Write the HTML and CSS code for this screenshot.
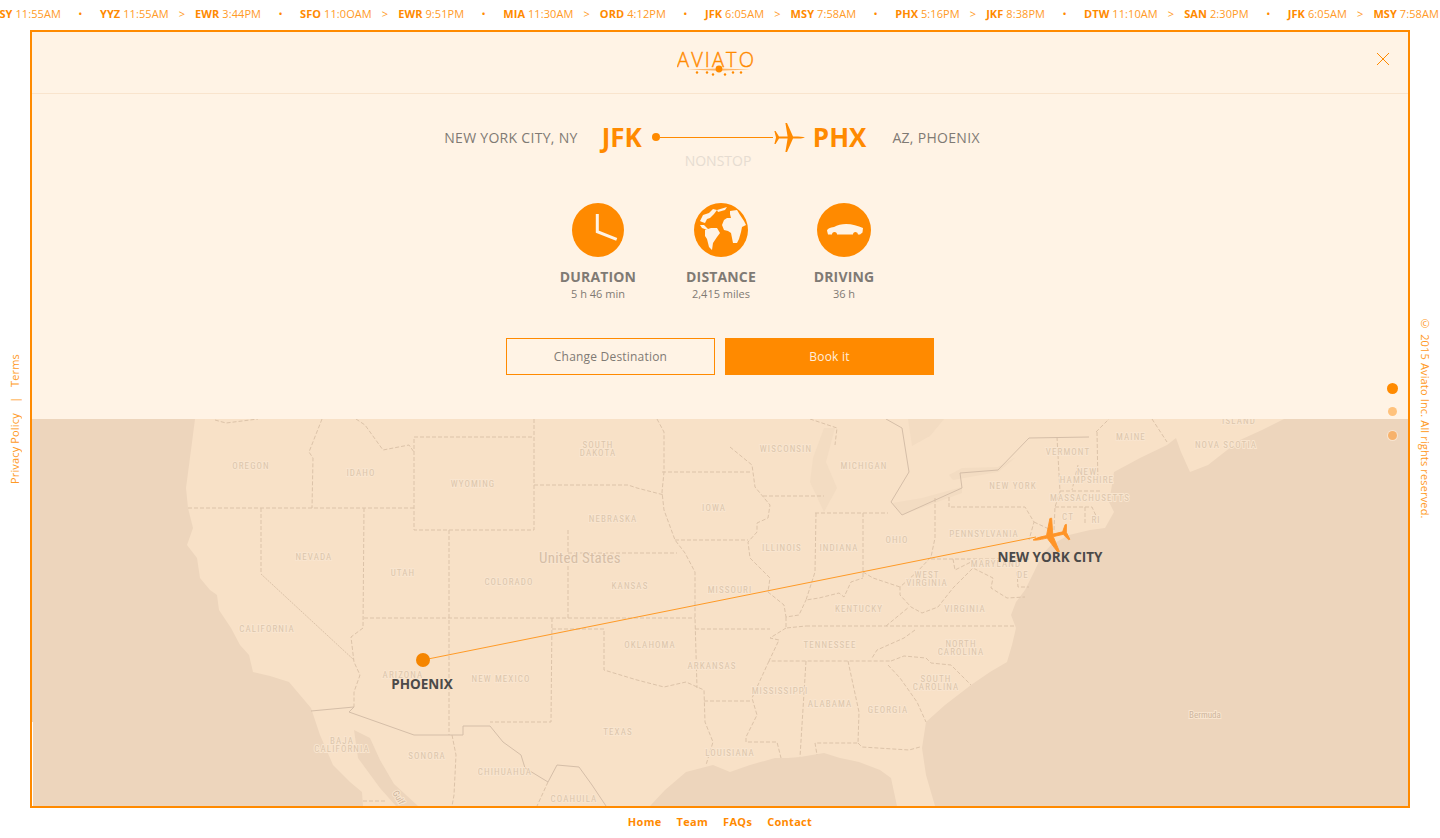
FILE: index.html
```html
<!DOCTYPE html>
<html lang="en">
<head>
  <meta charset="UTF-8">
  <meta name="viewport" content="width=device-width, initial-scale=1.0">
  <title>Aviato</title>
  <link rel="stylesheet" href="styles.css">
</head>
<body>
  <svg class="defs" width="0" height="0">
    <defs>
      <path id="plane" d="M32 14.5C30 13.6 26 13.4 22 13.4L20 13.4L14 0L12.4 0L14.6 13.4L6 13.4L2.6 8L1.4 8L3 14.5L1.4 21L2.6 21L6 15.6L14.6 15.6L12.4 29L14 29L20 15.6L22 15.6C26 15.6 30 15.4 32 14.5Z"/>
    </defs>
  </svg>

  <!-- Ticker -->
  <div class="ticker">
    <span class="flight first"><b>MSY</b> 11:55AM</span><span class="sep">•</span>
    <span class="flight"><b>YYZ</b> 11:55AM<i>&gt;</i><b>EWR</b> 3:44PM</span><span class="sep">•</span>
    <span class="flight"><b>SFO</b> 11:0OAM<i>&gt;</i><b>EWR</b> 9:51PM</span><span class="sep">•</span>
    <span class="flight"><b>MIA</b> 11:30AM<i>&gt;</i><b>ORD</b> 4:12PM</span><span class="sep">•</span>
    <span class="flight"><b>JFK</b> 6:05AM<i>&gt;</i><b>MSY</b> 7:58AM</span><span class="sep">•</span>
    <span class="flight"><b>PHX</b> 5:16PM<i>&gt;</i><b>JKF</b> 8:38PM</span><span class="sep">•</span>
    <span class="flight"><b>DTW</b> 11:10AM<i>&gt;</i><b>SAN</b> 2:30PM</span><span class="sep">•</span>
    <span class="flight"><b>JFK</b> 6:05AM<i>&gt;</i><b>MSY</b> 7:58AM</span>
  </div>

  <div class="middle">
    <div class="side side-left">
      <a>Privacy Policy</a><span class="bar">|</span><a>Terms</a>
    </div>

    <main class="frame">
      <section class="panel">
        <header class="topbar">
          <svg class="logo" width="90" height="34" viewBox="0 0 90 34">
            <text class="logo-text" x="0" y="21" textLength="77">AVIATO</text>
            <path class="logo-wing" d="M10 23.600L42 22.400L73 23.600L42 24.800Z"/>
            <circle class="logo-dot" cx="42" cy="23" r="3.4"/>
            <circle class="logo-dot" cx="20" cy="26.500" r="1.200"/>
            <circle class="logo-dot" cx="30" cy="26.500" r="1.200"/>
            <circle class="logo-dot" cx="36" cy="28.500" r="1.200"/>
            <circle class="logo-dot" cx="48" cy="28.500" r="1.200"/>
            <circle class="logo-dot" cx="56" cy="26.500" r="1.200"/>
            <circle class="logo-dot" cx="64" cy="26.500" r="1.200"/>
          </svg>
          <svg class="close" width="14" height="14" viewBox="0 0 14 14">
            <path d="M1 1L13 13M13 1L1 13"/>
          </svg>
        </header>

        <div class="route">
          <span class="city city-from">NEW YORK CITY, NY</span>
          <span class="code">JFK</span>
          <span class="path">
            <span class="path-dot"></span>
            <span class="path-line"></span>
            <svg class="path-plane" width="32" height="29" viewBox="0 0 32 29"><use href="#plane"/></svg>
          </span>
          <span class="code">PHX</span>
          <span class="city city-to">AZ, PHOENIX</span>
        </div>
        <p class="nonstop">NONSTOP</p>

        <div class="stats">
          <div class="stat">
            <svg class="stat-icon" width="54" height="54" viewBox="0 0 54 54">
              <ellipse class="icon-bg" cx="27" cy="27" rx="26" ry="27"/>
              <path class="icon-hand" d="M26.300 11V28.700L45.700 36.300"/>
            </svg>
            <h3>DURATION</h3>
            <p>5 h 46 min</p>
          </div>
          <div class="stat">
            <svg class="stat-icon" width="54" height="54" viewBox="0 0 54 54">
              <circle class="icon-bg" cx="27" cy="27" r="27"/>
              <path class="icon-fill" d="M9 12L15 10L19 6L23 7L20 11L16 15L13 16L11 20L8 19L6 18Z"/>
              <path class="icon-fill" d="M23 7L33 4L31 7L24 9Z"/>
              <path class="icon-fill" d="M6 22L10 22L13 25L16 28L12 26.500L8 25Z"/>
              <path class="icon-fill" d="M11 27L17 25L23 25L26 30L23 34L19 40L18 47L15 44L14 40L13 36L11 33Z"/>
              <path class="icon-fill" d="M36 8L43 7L46 12L50 18L52 22L48 24L47 29L45 36L43 40L39 40L38 35L37 30L34 28L30 27L28 22L30 17L33 15L37 15L36 11Z"/>
            </svg>
            <h3>DISTANCE</h3>
            <p>2,415 miles</p>
          </div>
          <div class="stat">
            <svg class="stat-icon" width="54" height="54" viewBox="0 0 54 54">
              <circle class="icon-bg" cx="27" cy="27" r="27"/>
              <path class="icon-fill" d="M10 27.500C10.500 25.500 13 24.500 17 24C20 22 25 21 29 21C35 21 41 23 46 25L45.500 29.500L43 31.500H41A2.500 2.500 0 0 0 36 31.500H20A2.500 2.500 0 0 0 15 31.500H11Z"/>
            </svg>
            <h3>DRIVING</h3>
            <p>36 h</p>
          </div>
        </div>

        <div class="actions">
          <button class="btn btn-outline" type="button">Change Destination</button>
          <button class="btn btn-solid" type="button">Book it</button>
        </div>
      </section>

      <svg class="map" viewBox="32 419 1376 387" width="1376" height="387">
        <rect class="sea" x="32" y="419" width="1376" height="387"/>
        <rect class="sliver" x="32" y="722" width="1" height="84"/>
        <path class="land" d="M195 419L191 450L186 488L188 508L191 520L193 528L187 545L197 558L200 578L210 590L217 595L219 610L231 628L240 645L249 655L253 672L270 676L289 682L300 695L311 708L320 735L333 765L350 782L362 792L363 806L650 806L665 790L686 772L713 765L730 772L750 765L775 758L788 758L800 757L824 753L840 758L859 762L880 770L891 778L897 806L935 806L926 775L922 748L926 722L945 705L971 685L990 672L1007 662L1012 645L1016 628L1011 615L1016 602L1025 590L1034 572L1042 555L1051 545L1069 535L1090 530L1105 528L1114 512L1109 502L1112 485L1114 472L1140 458L1167 445L1176 438L1181 452L1190 472L1208 465L1240 440L1262 430L1284 419Z"/>
        <path class="sea" d="M354 730L370 738L380 760L394 784L418 806L396 806L380 788L358 758Z"/>
        <path class="lake" d="M824 428L813 458L810 482L824 512L837 488L826 462L835 428Z"/>
        <path class="lake" d="M908 419L944 419L930 436L912 446Z"/>
        <path class="lake" d="M892 503L902 515L962 493L962 487L922 498Z"/>
        <path class="lake" d="M949 475L953 480L998 472L1016 457L998 467L962 468Z"/>

        <!-- State lines -->
        <path class="state" d="M414 437H534V530H414V437M534 419V437M534 485H628L637 488L664 495M657 419L664 432V472L662 492L664 510L675 540L685 553L695 572V618L697 688M662 472H752M675 540H748M568 553H677M449 530V735M568 530V618M364 618H695M552 618L551 722H490M552 629H604V670L637 680L664 687L686 682L704 690L705 722L713 742L706 765M695 629H770M704 701H752"/>
        <path class="state" d="M364 508L363 628L351 637L354 662L360 675L354 692L354 707M261 508V574M188 508H414M322 419L309 452L313 458L312 508M356 419L365 425L383 450L409 445L414 452M215 420L226 423L258 419"/>
        <path class="state thin" d="M261 574L354 660"/>
        <path class="state" d="M452 735L456 755L454 795L452 806M548 782L537 806M363 801H387"/>
        <path class="state" d="M730 447L752 465L755 487L770 505L768 518L757 523L757 532L748 542L750 558L770 578L768 592L784 605L786 617L799 615L806 600M763 496H824M815 513H888M863 513V578M816 513L815 572L806 600L819 598L839 593L844 597L851 582L863 578M935 498V538L931 557L917 572L900 587L900 595L911 607L922 613L938 607L953 588L973 568L993 578L991 588L1007 598L1025 597M863 572L873 578L900 587M931 559H1029M953 559L955 570L973 561M949 497V507H1025L1034 522L1029 540M1034 522L1051 530M1017 572L1018 587H1029M806 626H1016M886 626L909 607M786 617L786 628L806 626M786 628L770 638L779 640L769 661H891M915 630L904 638L877 650L872 658M891 661L904 656L926 658L931 663L951 665L971 685M888 665L900 678L917 702L926 722M769 661L752 698L757 715L746 737V742H777L781 758M806 661L800 757M848 661L859 712L858 743H815L817 755M858 743L862 747L909 750L920 747"/>
        <path class="state" d="M1057 437L1060 492L1055 507L1054 530M1078 465L1072 490M1055 507H1092L1097 518M1085 507V525M1060 491H1100M1097 432L1098 485M1096 432L1109 419M1152 419L1167 442M810 419L837 428L835 445"/>

        <!-- Borders -->
        <path class="border" d="M311 711L354 707L349 712L414 735H463V726H490L503 742L521 755L525 768L548 782L557 765L579 767L592 785L606 806"/>
        <path class="border" d="M886 419L902 428L909 472L891 502L902 515L962 488L960 473L998 470L1029 438L1089 437"/>

        <!-- Map labels -->
        <text class="map-label" x="251" y="469">OREGON</text>
        <text class="map-label" x="361" y="476">IDAHO</text>
        <text class="map-label" x="473" y="487">WYOMING</text>
        <text class="map-label" x="598" y="448">SOUTH</text>
        <text class="map-label" x="598" y="456">DAKOTA</text>
        <text class="map-label" x="613" y="522">NEBRASKA</text>
        <text class="map-label" x="714" y="511">IOWA</text>
        <text class="map-label" x="314" y="560">NEVADA</text>
        <text class="map-label" x="403" y="576">UTAH</text>
        <text class="map-label" x="509" y="585">COLORADO</text>
        <text class="map-label" x="630" y="589">KANSAS</text>
        <text class="map-label big" x="580" y="563">United States</text>
        <text class="map-label" x="267" y="632">CALIFORNIA</text>
        <text class="map-label" x="650" y="648">OKLAHOMA</text>
        <text class="map-label" x="403" y="678">ARIZONA</text>
        <text class="map-label" x="501" y="682">NEW MEXICO</text>
        <text class="map-label" x="618" y="735">TEXAS</text>
        <text class="map-label" x="342" y="744">BAJA</text>
        <text class="map-label" x="342" y="752">CALIFORNIA</text>
        <text class="map-label" x="427" y="759">SONORA</text>
        <text class="map-label" x="505" y="775">CHIHUAHUA</text>
        <text class="map-label" x="574" y="802">COAHUILA</text>
        <text class="map-label small" transform="translate(396 799) rotate(60)">Gulf</text>
        <text class="map-label" x="786" y="452">WISCONSIN</text>
        <text class="map-label" x="864" y="469">MICHIGAN</text>
        <text class="map-label" x="730" y="593">MISSOURI</text>
        <text class="map-label" x="782" y="551">ILLINOIS</text>
        <text class="map-label" x="839" y="551">INDIANA</text>
        <text class="map-label" x="897" y="543">OHIO</text>
        <text class="map-label" x="984" y="537">PENNSYLVANIA</text>
        <text class="map-label" x="1013" y="489">NEW YORK</text>
        <text class="map-label" x="1068" y="455">VERMONT</text>
        <text class="map-label" x="1087" y="475">NEW</text>
        <text class="map-label" x="1087" y="483">HAMPSHIRE</text>
        <text class="map-label" x="1090" y="501">MASSACHUSETTS</text>
        <text class="map-label" x="1068" y="520">CT</text>
        <text class="map-label" x="1096" y="523">RI</text>
        <text class="map-label" x="1131" y="440">MAINE</text>
        <text class="map-label" x="1226" y="448">NOVA SCOTIA</text>
        <text class="map-label" x="1239" y="424">ISLAND</text>
        <text class="map-label" x="927" y="578">WEST</text>
        <text class="map-label" x="927" y="586">VIRGINIA</text>
        <text class="map-label" x="965" y="612">VIRGINIA</text>
        <text class="map-label" x="859" y="612">KENTUCKY</text>
        <text class="map-label" x="996" y="567">MARYLAND</text>
        <text class="map-label" x="1023" y="578">DE</text>
        <text class="map-label" x="830" y="648">TENNESSEE</text>
        <text class="map-label" x="712" y="669">ARKANSAS</text>
        <text class="map-label" x="961" y="647">NORTH</text>
        <text class="map-label" x="961" y="655">CAROLINA</text>
        <text class="map-label" x="936" y="682">SOUTH</text>
        <text class="map-label" x="936" y="690">CAROLINA</text>
        <text class="map-label" x="780" y="694">MISSISSIPPI</text>
        <text class="map-label" x="830" y="707">ALABAMA</text>
        <text class="map-label" x="888" y="713">GEORGIA</text>
        <text class="map-label" x="730" y="756">LOUISIANA</text>
        <text class="map-label small" x="1205" y="718">Bermuda</text>

        <!-- Flight -->
        <line class="flight-line" x1="423" y1="660" x2="1036" y2="537"/>
        <circle class="flight-dot" cx="423" cy="660" r="7"/>
        <use class="flight-plane" href="#plane" transform="translate(1033 540) rotate(-13) scale(-1.18 1.18) translate(-32 -14.500)"/>
        <text class="city-label" x="422" y="689">PHOENIX</text>
        <text class="city-label" x="1050" y="562">NEW YORK CITY</text>
      </svg>

      <div class="pager">
        <span class="pager-dot active"></span>
        <span class="pager-dot light"></span>
        <span class="pager-dot ringed"></span>
      </div>
    </main>

    <div class="side side-right">© 2015 Aviato Inc. All rights reserved.</div>
  </div>

  <footer class="footer">
    <a>Home</a>
    <a>Team</a>
    <a>FAQs</a>
    <a>Contact</a>
  </footer>
</body>
</html>
```

FILE: styles.css
```css
/* General */
html, body {
  height: 100%;
}

body {
  margin: 0;
  background-color: #fff;
  color: #ff8a00;
  font-family: "Open Sans", Arial, sans-serif;
  display: flex;
  flex-direction: column;
  overflow: hidden;
}

.defs {
  position: absolute;
}

/* Ticker */
.ticker {
  height: 30px;
  flex: none;
  display: flex;
  align-items: center;
  padding-bottom: 3px;
  box-sizing: border-box;
  white-space: nowrap;
  overflow: hidden;
  font-size: 11px;
  letter-spacing: 0.08px;
  color: #ff9a26;
}

.flight {
  flex: none;
}

.flight.first {
  margin-left: -11px;
}

.flight b {
  font-weight: 700;
  color: #ff8a00;
}

.flight i {
  font-style: normal;
  margin: 0 10px;
}

.sep {
  flex: none;
  width: 39px;
  text-align: center;
  color: #ff8a00;
}

/* Frame */
.middle {
  flex: 1;
  display: flex;
  min-height: 0;
}

.side {
  width: 30px;
  flex: none;
  box-sizing: border-box;
  display: flex;
  align-items: center;
  justify-content: center;
  writing-mode: vertical-rl;
  font-size: 11px;
  letter-spacing: 0.15px;
  color: #ff9a26;
  white-space: nowrap;
}

.side-left {
  transform: rotate(180deg);
  padding-left: 2px;
}

.side-right {
  padding-bottom: 4px;
}

.side-left .bar {
  margin: 10px 0;
}

.frame {
  flex: 1;
  position: relative;
  border: 2px solid #ff8a00;
  display: flex;
  flex-direction: column;
  min-width: 0;
}

.panel {
  height: 387px;
  flex: none;
  background-color: #fff3e5;
  display: flex;
  flex-direction: column;
  align-items: center;
}

.topbar {
  align-self: stretch;
  height: 62px;
  flex: none;
  box-sizing: border-box;
  border-bottom: 1px solid #f9e4cd;
  display: flex;
  align-items: center;
  justify-content: center;
  position: relative;
}

.logo {
  margin: 0 0 0 4px;
}

.logo-text {
  font-family: "Open Sans", Arial, sans-serif;
  font-weight: 300;
  font-size: 20px;
  fill: #ff8a00;
  stroke: #ff8a00;
  stroke-width: 0.4;
}

.logo-wing {
  fill: #ffb566;
}

.logo-dot {
  fill: #ff8a00;
}

.close {
  position: absolute;
  right: 18px;
  top: 20px;
}

.close path {
  fill: none;
  stroke: #ff8a00;
  stroke-width: 1;
}

/* Route */
.route {
  display: flex;
  align-items: center;
  margin-top: 24px;
  margin-right: 16px;
  height: 38px;
}

.city {
  font-size: 14px;
  letter-spacing: 0.3px;
  color: #7f7a74;
}

.city-from {
  margin-right: 24px;
}

.city-to {
  margin-left: 26px;
}

.code {
  font-size: 26px;
  font-weight: 700;
  color: #ff8a00;
}

.path {
  width: 153px;
  margin: 0 8px 0 10px;
  display: flex;
  align-items: center;
}

.path-dot {
  width: 8px;
  height: 8px;
  flex: none;
  border-radius: 50%;
  background-color: #ff8a00;
}

.path-line {
  flex: 1;
  height: 1px;
  background-color: #ff8a00;
}

.path-plane {
  flex: none;
  fill: #ff8a00;
}

.nonstop {
  margin: -5px 4px 0 0;
  font-size: 14px;
  line-height: 19px;
  color: #e6dcd1;
}

/* Stats */
.stats {
  display: flex;
  margin-top: 33px;
  margin-left: 2px;
}

.stat {
  width: 123px;
  display: flex;
  flex-direction: column;
  align-items: center;
}

.stat-icon {
  display: block;
}

.icon-bg {
  fill: #ff8a00;
}

.icon-fill {
  fill: #fff3e5;
}

.icon-hand {
  fill: none;
  stroke: #fff3e5;
  stroke-width: 3;
}

.stat h3 {
  margin: 10px 0 0;
  font-size: 14px;
  line-height: 19px;
  font-weight: 700;
  letter-spacing: 0.15px;
  color: #7f7a74;
}

.stat p {
  margin: 0;
  font-size: 11px;
  line-height: 15px;
  color: #7f7a74;
}

/* Buttons */
.actions {
  display: flex;
  gap: 10px;
  margin-top: 37px;
}

.btn {
  width: 209px;
  height: 37px;
  padding: 0;
  border: 1px solid #ff8a00;
  font-family: "Open Sans", Arial, sans-serif;
  font-size: 12px;
  letter-spacing: 0.2px;
}

.btn-outline {
  background-color: transparent;
  color: #7f7a74;
}

.btn-solid {
  background-color: #ff8a00;
  color: #ffeedd;
}

/* Map */
.map {
  display: block;
  flex: none;
}

.sea {
  fill: #edd5bc;
}

.sliver {
  fill: #fff;
}

.land {
  fill: #f8e1c7;
}

.lake {
  fill: #f3dcc2;
}

.state {
  fill: none;
  stroke: #dcc3a9;
  stroke-width: 1;
  stroke-dasharray: 4 2;
}

.state.thin {
  stroke-dasharray: 2 1;
}

.border {
  fill: none;
  stroke: #d5bea8;
  stroke-width: 1;
}

.map-label {
  font-family: Roboto, Arial, sans-serif;
  font-size: 9px;
  font-stretch: 75%;
  letter-spacing: 1.1px;
  fill: #dcc5ac;
  stroke: #f9e5cf;
  stroke-width: 2px;
  paint-order: stroke;
  text-anchor: middle;
}

.map-label.big {
  font-size: 15px;
  letter-spacing: 0.2px;
  fill: #d6bea6;
}

.map-label.small {
  font-size: 9px;
  letter-spacing: 0;
  fill: #cdb59e;
}

.flight-line {
  stroke: #ff9a26;
  stroke-width: 1;
}

.flight-dot {
  fill: #f58500;
}

.flight-plane {
  fill: #ff9426;
  stroke: #ff9426;
  stroke-width: 0.7;
}

.city-label {
  font-family: "Open Sans", Arial, sans-serif;
  font-size: 13.5px;
  font-weight: 700;
  fill: #4b4a49;
  text-anchor: middle;
}

/* Pager */
.pager {
  position: absolute;
  right: 10px;
  top: 351px;
  display: flex;
  flex-direction: column;
  align-items: center;
  gap: 13px;
  width: 12px;
}

.pager-dot {
  display: block;
  width: 9px;
  height: 9px;
  border-radius: 50%;
}

.pager-dot.active {
  width: 11px;
  height: 11px;
  background-color: #ff8a00;
}

.pager-dot.light {
  background-color: #ffc27c;
}

.pager-dot.ringed {
  margin-top: 2px;
  background-color: #f7b26b;
  box-shadow: 0 0 0 1px #f8e4cf;
}

/* Footer */
.footer {
  height: 30px;
  flex: none;
  box-sizing: border-box;
  padding-bottom: 4px;
  display: flex;
  align-items: center;
  justify-content: center;
  gap: 15px;
  font-size: 11px;
  font-weight: 700;
  letter-spacing: 0.3px;
  color: #ff8a00;
}
```
